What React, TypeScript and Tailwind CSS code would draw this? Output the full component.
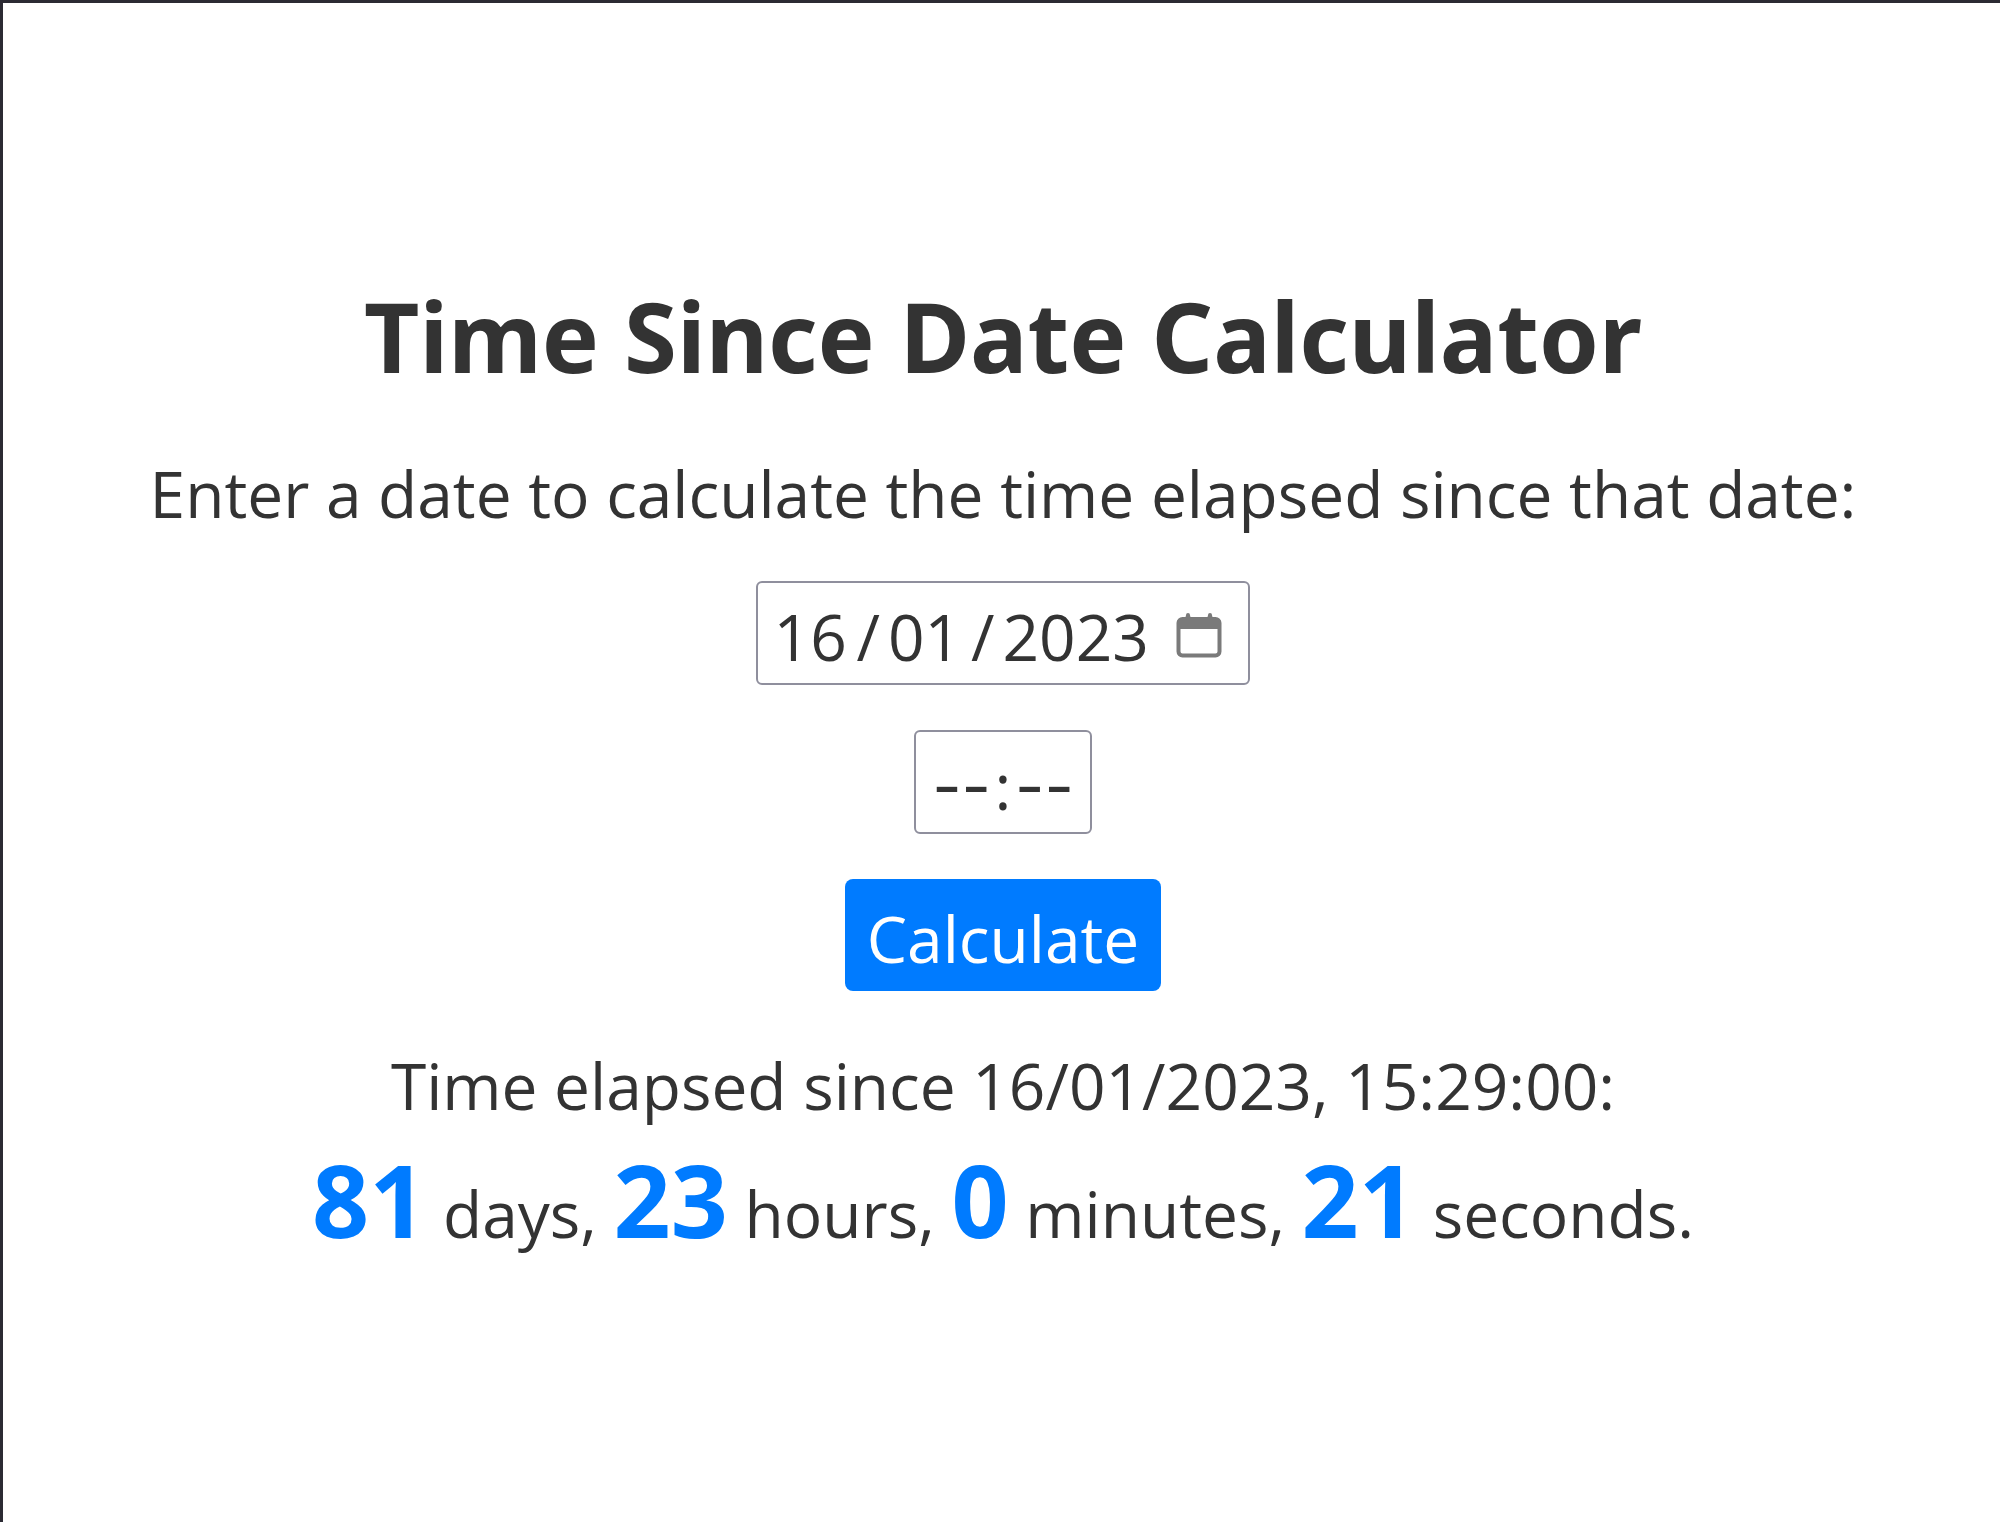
import { Fragment, useState } from "react";

function CalendarIcon() {
  return (
    <svg viewBox="0 0 46 46" className="h-[46px] w-[46px]" fill="none" aria-hidden="true">
      <rect x="2.5" y="7" width="41" height="36.5" rx="4" stroke="#7a7a7a" strokeWidth="4" />
      <path d="M1 11a5 5 0 0 1 5-5h1c2 0 3-1 3-3a2 2 0 0 1 4 0c0 2 1 3 3 3h12c2 0 3-1 3-3a2 2 0 0 1 4 0c0 2 1 3 3 3h1a5 5 0 0 1 5 5v6H1z" fill="#7a7a7a" />
    </svg>
  );
}

const dateFields = [
  { name: "Day", value: "16", width: "w-[75px]" },
  { name: "Month", value: "01", width: "w-[75px]" },
  { name: "Year", value: "2023", width: "w-[150px]" },
];

const parts = [
  { value: 81, label: " days, " },
  { value: 23, label: " hours, " },
  { value: 0, label: " minutes, " },
  { value: 21, label: " seconds." },
];

export default function App() {
  const [date, setDate] = useState(dateFields.map((f) => f.value));
  const [hours, setHours] = useState("");
  const [minutes, setMinutes] = useState("");
  return (
    <main className="flex min-h-screen flex-col items-center border-t-3 border-l-3 border-[#2b2a33] bg-white pt-[273px] pr-8 pl-[35px] text-center font-['Open_Sans',sans-serif] text-[64px] text-[#333333]">
      <h1 className="font-['Noto_Sans',sans-serif] text-[96px] leading-[120px] font-bold">Time Since Date Calculator</h1>
      <label htmlFor="Day" className="mt-[53px] leading-[90px]">
        Enter a date to calculate the time elapsed since that date:
      </label>
      <div className="mt-[42px] flex h-[104px] items-center rounded-md border-2 border-[#8f8f9d] pr-[26px] pl-4">
        <div className="flex items-center gap-2 pt-2">
          {dateFields.map((f, i) => (
            <Fragment key={f.name}>
              {i > 0 && <span>/</span>}
              <input
                id={f.name}
                aria-label={f.name}
                className={`h-[90px] outline-none ${f.width}`}
                value={date[i]}
                onChange={(e) => setDate(date.map((d, j) => (j === i ? e.target.value : d)))}
              />
            </Fragment>
          ))}
        </div>
        <button type="button" aria-label="Open calendar" className="ml-6 pt-1">
          <CalendarIcon />
        </button>
      </div>
      <div className="mt-[45px] flex h-[104px] w-[178px] items-center justify-center rounded-md border-2 border-[#8f8f9d] pt-2">
        <input aria-label="Hours" placeholder="--" className="h-[90px] w-[66px] text-center font-['Inter',sans-serif] outline-none placeholder:text-[#333333]" value={hours} onChange={(e) => setHours(e.target.value)} />
        <span>:</span>
        <input aria-label="Minutes" placeholder="--" className="h-[90px] w-[66px] text-center font-['Inter',sans-serif] outline-none placeholder:text-[#333333]" value={minutes} onChange={(e) => setMinutes(e.target.value)} />
      </div>
      <button type="button" className="mt-[45px] h-28 w-[316px] rounded-lg bg-[#007bff] pt-2 text-white">Calculate</button>
      <p className="mt-[50px] leading-[90px]">Time elapsed since 16/01/2023, 15:29:00:</p>
      <p className="mt-2 leading-[120px]">
        {parts.map((p) => (
          <Fragment key={p.label}>
            <strong className="font-['Noto_Sans',sans-serif] text-[100px] font-bold text-[#007bff]">{p.value}</strong>
            {p.label}
          </Fragment>
        ))}
      </p>
    </main>
  );
}
